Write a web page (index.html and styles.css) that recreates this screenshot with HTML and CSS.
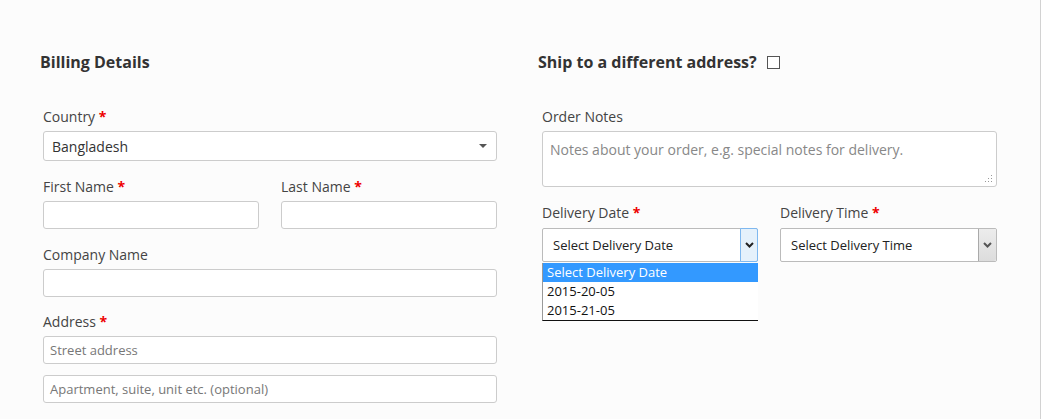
FILE: index.html
```html
<!DOCTYPE html>
<html>
<head>
<meta charset="utf-8">
<link rel="stylesheet" href="styles.css">
</head>
<body>
<div class="page">
  <div class="cols">
    <div class="col">
      <h3 class="heading">Billing Details</h3>
      <div class="field">
        <label class="lbl">Country <span class="req">*</span></label>
        <div class="box select-box">
          <span class="val">Bangladesh</span>
          <span class="caret"></span>
        </div>
      </div>
      <div class="row2">
        <div class="field">
          <label class="lbl">First Name <span class="req">*</span></label>
          <div class="box input"></div>
        </div>
        <div class="field">
          <label class="lbl">Last Name <span class="req">*</span></label>
          <div class="box input"></div>
        </div>
      </div>
      <div class="field company">
        <label class="lbl">Company Name</label>
        <div class="box input"></div>
      </div>
      <div class="field">
        <label class="lbl">Address <span class="req">*</span></label>
        <div class="box input"><span class="ph">Street address</span></div>
        <div class="box input second"><span class="ph">Apartment, suite, unit etc. (optional)</span></div>
      </div>
    </div>
    <div class="col">
      <h3 class="heading">Ship to a different address? <span class="check"></span></h3>
      <div class="field">
        <label class="lbl">Order Notes</label>
        <div class="box textarea">
          <span class="ph2">Notes about your order, e.g. special notes for delivery.</span>
          <svg class="grip" width="8" height="8" viewBox="0 0 8 8"><rect x="6" y="0" width="1" height="1" fill="#999"/><rect x="3" y="3" width="1" height="1" fill="#999"/><rect x="6" y="3" width="1" height="1" fill="#999"/><rect x="0" y="6" width="1" height="1" fill="#999"/><rect x="3" y="6" width="1" height="1" fill="#999"/><rect x="6" y="6" width="1" height="1" fill="#999"/></svg>
        </div>
      </div>
      <div class="row2 delivery">
        <div class="field">
          <label class="lbl">Delivery Date <span class="req">*</span></label>
          <div class="nsel focused">
            <span class="nval">Select Delivery Date</span>
            <span class="nbtn"><svg width="9" height="6" viewBox="0 0 9 6"><path d="M1 1 L4.5 4.5 L8 1" fill="none" stroke="#222" stroke-width="2"/></svg></span>
            <ul class="dropdown">
              <li class="opt active">Select Delivery Date</li>
              <li class="opt">2015-20-05</li>
              <li class="opt">2015-21-05</li>
            </ul>
          </div>
        </div>
        <div class="field">
          <label class="lbl">Delivery Time <span class="req">*</span></label>
          <div class="nsel">
            <span class="nval">Select Delivery Time</span>
            <span class="nbtn"><svg width="9" height="6" viewBox="0 0 9 6"><path d="M1 1 L4.5 4.5 L8 1" fill="none" stroke="#555" stroke-width="2"/></svg></span>
          </div>
        </div>
      </div>
    </div>
  </div>
</div>
</body>
</html>
```
FILE: styles.css
```css
* { box-sizing: border-box; }
html, body { margin: 0; padding: 0; }
body {
  background: #fcfcfc;
  font-family: "Open Sans", "Liberation Sans", sans-serif;
  color: #444;
}
.page {
  width: 1041px;
  height: 419px;
  border-right: 1px solid #d2d2d2;
  overflow: hidden;
}
.cols {
  display: grid;
  grid-template-columns: 454px 455px;
  column-gap: 45px;
  padding: 51px 0 0 43px;
}
.col { display: flex; flex-direction: column; }
.heading {
  margin: 0 0 34px -3px;
  font-size: 16px;
  font-weight: 700;
  line-height: 22px;
  color: #333;
  display: flex;
  align-items: center;
}
.col:nth-child(2) .heading { margin-left: -4px; }
.check {
  display: inline-block;
  width: 13px;
  height: 13px;
  border: 1px solid #555;
  margin-left: 10px;
  background: #fff;
}
.field { display: flex; flex-direction: column; margin-bottom: 16px; }
.company { margin-bottom: 15px; }
.lbl {
  font-size: 14px;
  line-height: 20px;
  margin-bottom: 4px;
  color: #444;
}
.req { color: #e00; font-weight: 700; }
.box {
  background: #fff;
  border: 1px solid #ccc;
  border-radius: 3px;
}
.select-box {
  height: 30px;
  display: flex;
  align-items: center;
  justify-content: space-between;
  padding: 0 8px 0 8px;
}
.val { font-size: 14px; color: #333; }
.caret {
  width: 0; height: 0;
  border-left: 4px solid transparent;
  border-right: 4px solid transparent;
  border-top: 4px solid #555;
  margin-right: 1px;
}
.row2 {
  display: grid;
  grid-template-columns: 1fr 1fr;
  column-gap: 22px;
}
.row2 .field { margin-bottom: 16px; }
.input {
  height: 28px;
  display: flex;
  align-items: center;
  padding: 0 6px;
}
.second { margin-top: 11px; }
.ph { font-size: 13px; color: #777; }
.textarea {
  height: 56px;
  position: relative;
  padding: 6px 7px;
}
.ph2 { font-size: 14px; color: #888; line-height: 20px; }
.grip { position: absolute; right: 3px; bottom: 3px; }
.delivery { grid-template-columns: 216px 217px; column-gap: 22px; }
.delivery .lbl { margin-bottom: 5px; }
.nsel {
  position: relative;
  height: 34px;
  background: #fff;
  border: 1px solid #bbb;
  border-radius: 2px;
  display: flex;
  align-items: center;
  justify-content: space-between;
}
.nval { font-size: 13px; color: #222; padding-left: 10px; }
.nbtn {
  width: 18px;
  height: 32px;
  display: flex;
  align-items: center;
  justify-content: center;
  background: linear-gradient(#ececec, #dcdcdc);
  border-left: 1px solid #aaa;
  border-radius: 0 2px 2px 0;
}
.focused .nbtn {
  background: #e5f1fb;
  border: 1px solid #7fb8ef;
  height: 34px;
  margin-right: -1px;
  width: 18px;
}
.dropdown {
  position: absolute;
  left: -1px;
  top: 34px;
  width: 216px;
  margin: 0;
  padding: 0;
  list-style: none;
  background: #fff;
  border-left: 1px solid #999;
  border-bottom: 1px solid #111;
  z-index: 2;
}
.opt {
  font-size: 13px;
  line-height: 19px;
  height: 19px;
  padding-left: 4px;
  color: #111;
}
.opt.active { background: #3399ff; color: #fff; }
```
